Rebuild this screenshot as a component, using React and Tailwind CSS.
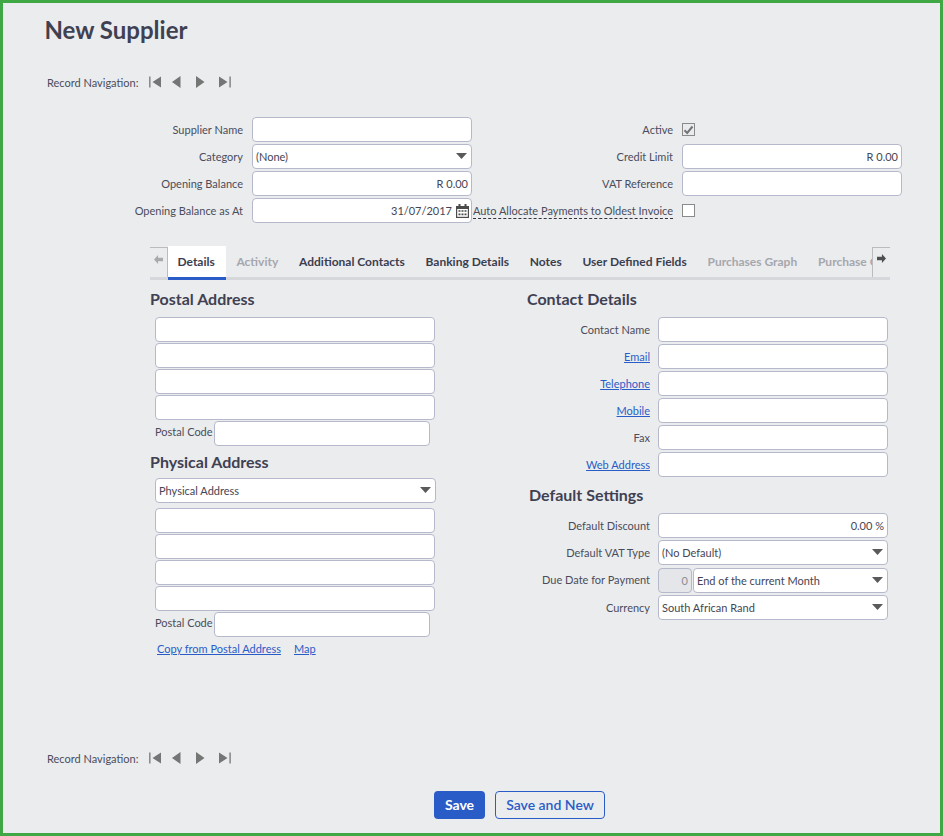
import React from "react";

const inputCls = "h-[25px] bg-white border border-[#b6b8cb] rounded-[4px] text-[11px] text-[#454654] outline-none";

function Input({ w = "w-[220px]", value = "", right = false }) {
  return (
    <input
      readOnly
      value={value}
      className={`${inputCls} ${w} block px-[3px] shrink-0 ${right ? "text-right" : "text-left"}`}
    />
  );
}

function Select({ w = "w-[230px]", value }) {
  return (
    <div className={`${inputCls} ${w} shrink-0 flex items-center justify-between pl-[3px] pr-[4px]`}>
      <span className="mt-[2px]">{value}</span>
      <svg width="11" height="6" viewBox="0 0 11 6" className="shrink-0 mb-[2px]">
        <path d="M0 0h11L5.5 6z" fill="#5a5a5a" />
      </svg>
    </div>
  );
}

function NavIcons() {
  return (
    <div className="flex items-center ml-[11px] mb-[2px]">
      <svg width="83" height="12" viewBox="0 0 83 12" fill="#757575">
        <rect x="0" y="0.5" width="1.6" height="11" fill="#8c8c8c" />
        <path d="M3.5 6L12 0.5V11.5z" />
        <path d="M23 6L31.5 0V12z" />
        <path d="M47 0L55.5 6L47 12z" />
        <path d="M70 0.5L78.5 6L70 11.5z" />
        <rect x="80.3" y="0.5" width="1.6" height="11" fill="#8c8c8c" />
      </svg>
    </div>
  );
}

function RecordNav({ className }) {
  return (
    <div className={`flex items-center h-[20px] pl-[44px] text-[11px] text-[#4a4c5c] ${className}`}>
      <span>Record Navigation:</span>
      <NavIcons />
    </div>
  );
}

function Calendar() {
  return (
    <svg width="13" height="14" viewBox="0 0 13 14" className="shrink-0">
      <path d="M0 2h13v12H0z" fill="#4b4b4b" />
      <rect x="2.5" y="0" width="2" height="3.5" fill="#4b4b4b" />
      <rect x="8.5" y="0" width="2" height="3.5" fill="#4b4b4b" />
      <rect x="1.2" y="5" width="10.6" height="7.8" fill="#fff" />
      <path d="M2.5 6.2h2v1.6h-2zM5.5 6.2h2v1.6h-2zM8.5 6.2h2v1.6h-2zM2.5 9.6h2v1.6h-2zM5.5 9.6h2v1.6h-2zM8.5 9.6h2v1.6h-2z" fill="#4b4b4b" />
    </svg>
  );
}

function Label({ w, children }) {
  return <div className={`${w} shrink-0 text-right text-[11px] text-[#4a4c5c] mr-[9px] mt-[2px]`}>{children}</div>;
}

function TopRow({ left, leftField, right, rightField }) {
  return (
    <div className="flex items-center h-[25px]">
      <Label w="w-[240px]">{left}</Label>
      {leftField}
      <Label w="w-[201px]">{right}</Label>
      {rightField}
    </div>
  );
}

function Checkbox({ checked }) {
  return (
    <div className={`w-[13px] h-[13px] border border-[#8a8a8a] flex items-center justify-center ${checked ? "bg-[#e9ebee]" : "bg-white"}`}>
      {checked && (
        <svg width="11" height="10" viewBox="0 0 11 10">
          <path d="M1.5 5.2L4.2 8L9.5 1.5" fill="none" stroke="#757575" strokeWidth="2" />
        </svg>
      )}
    </div>
  );
}

function Arrow({ dir, color }) {
  return (
    <svg width="9" height="9" viewBox="0 0 10 9" preserveAspectRatio="none" className={dir === "left" ? "" : "rotate-180"}>
      <path d="M0 4.5L4.5 0V2.8H10V6.2H4.5V9z" fill={color} />
    </svg>
  );
}

function Tab({ children, muted, active }) {
  if (active) {
    return (
      <div className="h-[34px] -mb-[3px] bg-white border-b-[3px] border-[#2a5cc7] pl-[9.5px] pr-[10px] flex items-center text-[#3c3e4e] shrink-0 font-bold w-[58px]">
        <span>{children}</span>
      </div>
    );
  }
  return (
    <div className={`h-[31px] px-[10.4px] flex items-center shrink-0 font-bold ${muted ? "text-[#a5a7ad]" : "text-[#3c3e4e]"}`}>
      <span>{children}</span>
    </div>
  );
}

function Heading({ children, className = "" }) {
  return <h2 className={`h-[20px] leading-[20px] text-[16px] font-bold text-[#3f4152] ${className}`}>{children}</h2>;
}

function PostalCode() {
  return (
    <div className="flex items-center h-[25px] text-[11px] text-[#4a4c5c]">
      <span className="w-[59px] shrink-0 mb-[2px]">Postal Code</span>
      <Input w="w-[216px]" />
    </div>
  );
}

function FormRow({ label, link, children, className = "", labelClass = "mt-[2px]" }) {
  return (
    <div className={`flex items-center h-[25px] ${className}`}>
      <div className={`w-[123px] mr-[8px] shrink-0 text-right text-[11px] ${labelClass} ${link ? "text-[#2a5cc7] underline" : "text-[#4a4c5c]"}`}>{label}</div>
      {children}
    </div>
  );
}

export default function App() {
  return (
    <div
      className="h-[836px] w-[943px] border-[3px] border-[#3fa845] bg-[#ebecee] overflow-hidden"
      style={{ fontFamily: "Lato, 'Noto Sans', sans-serif" }}
    >
      <h1 className="mt-[12px] ml-[41.5px] h-[30px] leading-[30px] text-[24px] font-bold text-[#3f4152]">New Supplier</h1>
      <RecordNav className="mt-[28px]" />

      <div className="mt-[24px] flex flex-col gap-[2px]">
        <TopRow left="Supplier Name" leftField={<Input />} right="Active" rightField={<Checkbox checked />} />
        <TopRow left="Category" leftField={<Select w="w-[220px]" value="(None)" />} right="Credit Limit" rightField={<Input value="R 0.00" right />} />
        <TopRow left="Opening Balance" leftField={<Input value="R 0.00" right />} right="VAT Reference" rightField={<Input />} />
        <TopRow
          left="Opening Balance as At"
          leftField={
            <div className={`${inputCls} w-[220px] shrink-0 flex items-center justify-end gap-[4px] pr-[2px]`}>
              <span className="mt-[2px]">31/07/2017</span>
              <Calendar />
            </div>
          }
          right={<span className="border-b border-dashed border-[#33343f] pb-[1px]">Auto Allocate Payments to Oldest Invoice</span>}
          rightField={<Checkbox />}
        />
      </div>

      <div className="mt-[23px] ml-[147px] w-[740px] h-[34px] border-b-[3px] border-[#d5d7da] flex items-start text-[12px]">
        <div className="w-[18px] h-[30px] mt-px border-t border-r border-[#bcbcc0] shrink-0 flex items-center pl-[4px] pb-[7px]">
          <Arrow dir="left" color="#aaaaaa" />
        </div>
        <div className="flex-1 min-w-0 flex items-start overflow-hidden h-[34px]">
          <Tab active>Details</Tab>
          <Tab muted>Activity</Tab>
          <Tab>Additional Contacts</Tab>
          <Tab>Banking Details</Tab>
          <Tab>Notes</Tab>
          <Tab>User Defined Fields</Tab>
          <Tab muted>Purchases Graph</Tab>
          <Tab muted>Purchase Orders</Tab>
        </div>
        <div className="w-[18px] h-[30px] mt-px border-t border-l border-[#bcbcc0] shrink-0 flex items-center pl-[4px] pb-[9px]">
          <Arrow dir="right" color="#4f4f4f" />
        </div>
      </div>

      <div className="ml-[147px] flex items-start">
        <div className="w-[377px] shrink-0 pt-[9px]">
          <Heading>Postal Address</Heading>
          <div className="mt-[8px] pl-[5px] flex flex-col gap-px">
            <Input w="w-[280px]" />
            <Input w="w-[280px]" />
            <Input w="w-[280px]" />
            <Input w="w-[280px]" />
            <PostalCode />
          </div>
          <Heading className="mt-[6px]">Physical Address</Heading>
          <div className="mt-[6px] pl-[5px]">
            <Select w="w-[281px]" value="Physical Address" />
            <div className="mt-[5px] flex flex-col gap-px">
              <Input w="w-[280px]" />
              <Input w="w-[280px]" />
              <Input w="w-[280px]" />
              <Input w="w-[280px]" />
              <PostalCode />
            </div>
            <div className="mt-[4px] h-[16px] pl-[2px] flex items-center gap-[13px] text-[11px] text-[#2a5cc7] underline">
              <span>Copy from Postal Address</span>
              <span>Map</span>
            </div>
          </div>
        </div>

        <div className="pt-[9px]">
          <Heading>Contact Details</Heading>
          <div className="mt-[8px] flex flex-col gap-[2px]">
            <FormRow label="Contact Name"><Input w="w-[230px]" /></FormRow>
            <FormRow label="Email" link><Input w="w-[230px]" /></FormRow>
            <FormRow label="Telephone" link><Input w="w-[230px]" /></FormRow>
            <FormRow label="Mobile" link><Input w="w-[230px]" /></FormRow>
            <FormRow label="Fax"><Input w="w-[230px]" /></FormRow>
            <FormRow label="Web Address" link><Input w="w-[230px]" /></FormRow>
          </div>
          <Heading className="mt-[8px] ml-[2px]">Default Settings</Heading>
          <div className="mt-[8px] flex flex-col gap-[2px]">
            <FormRow label="Default Discount"><Input w="w-[230px]" value="0.00 %" right /></FormRow>
            <FormRow label="Default VAT Type"><Select value="(No Default)" /></FormRow>
            <FormRow label="Due Date for Payment" className="mt-px" labelClass="">
              <div className="flex gap-px">
                <input readOnly value="0" className="h-[25px] w-[34px] bg-[#e4e6e9] border border-[#b6b8cb] rounded-[4px] text-[11px] text-[#8b8d95] text-right px-[3px] outline-none" />
                <Select w="w-[195px]" value="End of the current Month" />
              </div>
            </FormRow>
            <FormRow label="Currency"><Select value="South African Rand" /></FormRow>
          </div>
        </div>
      </div>

      <RecordNav className="mt-[92px]" />

      <div className="mt-[22px] ml-[431px] flex gap-[10px]">
        <button className="h-[28px] w-[51px] pb-[2px] rounded-[4px] bg-[#2a5cc7] text-white text-[14px] font-bold">Save</button>
        <button className="h-[28px] w-[110px] pb-[2px] rounded-[4px] border border-[#2a5cc7] text-[#2a5cc7] text-[14px] font-semibold">Save and New</button>
      </div>
    </div>
  );
}
